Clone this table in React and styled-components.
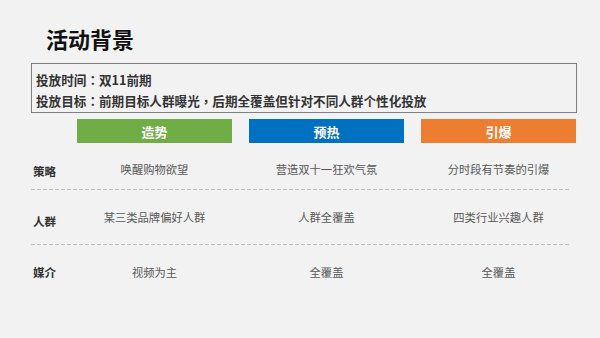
import React from "react";
import styled, { createGlobalStyle } from "styled-components";

const GlobalStyle = createGlobalStyle`
  html, body {
    margin: 0;
    padding: 0;
    background: #f2f2f2;
  }
  body {
    font-family: "Noto Sans CJK SC", "Noto Sans", sans-serif;
  }
`;

const COLS = "29px 155px 155px 155px";

const phases = [
  { name: "造势", color: "#70ad47" },
  { name: "预热", color: "#0070c0" },
  { name: "引爆", color: "#ed7d31" },
];

const rows = [
  { label: "策略", items: ["唤醒购物欲望", "营造双十一狂欢气氛", "分时段有节奏的引爆"], height: 46, top: 6, shift: 2 },
  { label: "人群", items: ["某三类品牌偏好人群", "人群全覆盖", "四类行业兴趣人群"], height: 54, top: 0, shift: 4 },
  { label: "媒介", items: ["视频为主", "全覆盖", "全覆盖"], height: 54, top: 0, shift: 0 },
];

export default function App() {
  return (
    <>
      <GlobalStyle />
      <Page>
        <Title>活动背景</Title>
        <InfoBox>
          <InfoLine>
            投放时间<Punct>：</Punct>双11前期
          </InfoLine>
          <InfoLine>
            投放目标<Punct>：</Punct>前期目标人群曝光<Punct>，</Punct>后期全覆盖但针对不同人群个性化投放
          </InfoLine>
        </InfoBox>
        <Table>
          <HeaderRow>
            <span />
            {phases.map((p) => (
              <PhaseBar key={p.name} color={p.color}>{p.name}</PhaseBar>
            ))}
          </HeaderRow>
          {rows.map((row, i) => (
            <React.Fragment key={row.label}>
              <Row height={row.height} top={row.top}>
                <RowLabel shift={row.shift}>{row.label}</RowLabel>
                {row.items.map((text, j) => (
                  <Cell key={j}>{text}</Cell>
                ))}
              </Row>
              {i < rows.length - 1 && <Divider />}
            </React.Fragment>
          ))}
        </Table>
      </Page>
    </>
  );
}

const Page = styled.div`
  width: 600px;
  height: 338px;
  overflow: hidden;
  padding-top: 25px;
  box-sizing: border-box;
`;

const Title = styled.h1`
  margin: 0 0 12px 46px;
  font-size: 22px;
  line-height: 26px;
  font-weight: 700;
  color: #111;
`;

const InfoBox = styled.div`
  margin-left: 31px;
  width: 546px;
  height: 50px;
  box-sizing: border-box;
  border: 1px solid #808080;
  padding: 5px 0 0 4px;
`;

const InfoLine = styled.div`
  font-size: 12.6px;
  line-height: 21px;
  font-weight: 700;
  color: #333;
  white-space: nowrap;
`;

const Punct = styled.span`
  font-family: "Noto Sans CJK TC", "Noto Sans CJK SC", sans-serif;
`;

const Table = styled.div`
  margin: 6px 0 0 31px;
  width: 546px;
`;

const HeaderRow = styled.div`
  display: grid;
  grid-template-columns: ${COLS};
  column-gap: 17px;
  height: 24px;
`;

const PhaseBar = styled.div`
  background: ${({ color }) => color};
  color: #fff;
  font-size: 13px;
  font-weight: 700;
  display: flex;
  align-items: center;
  justify-content: center;
`;

const Row = styled.div`
  display: grid;
  grid-template-columns: ${COLS};
  column-gap: 17px;
  height: ${({ height }) => height}px;
  box-sizing: border-box;
  padding-top: ${({ top }) => top}px;
  align-items: center;
`;

const RowLabel = styled.div`
  padding-left: 2px;
  margin-top: ${({ shift }) => shift * 2}px;
  font-size: 11.5px;
  font-weight: 700;
  color: #333;
  white-space: nowrap;
`;

const Cell = styled.div`
  text-align: center;
  font-size: 11.3px;
  color: #595959;
  white-space: nowrap;
`;

const Divider = styled.div`
  width: 538px;
  height: 1px;
  background-image: linear-gradient(to right, #bfbfbf 0 4px, transparent 4px 6px);
  background-size: 6px 1px;
  background-repeat: repeat-x;
`;
